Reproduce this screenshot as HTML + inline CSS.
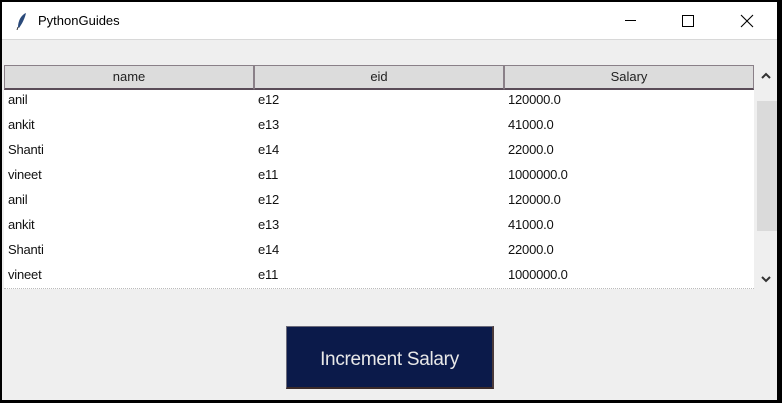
<!DOCTYPE html>
<html><head><style>
*{margin:0;padding:0;box-sizing:border-box}
body{width:782px;height:403px;background:#000;position:relative;overflow:hidden;font-family:"Liberation Sans",sans-serif}
.win{position:absolute;left:2px;top:2px;width:775px;height:398px;background:#efefef}
.title{position:absolute;left:0;top:0;width:775px;height:38px;background:#fff;border-bottom:1px solid #d8d8d8}
.title span{position:absolute;left:36px;top:11px;font-size:13px;color:#000}
.hdr{position:absolute;top:63px;height:25px;background:#dcdcdc;border:1px solid #8a8088;border-bottom:2px solid #5a4c58;font-size:13px;text-align:center;line-height:22px;color:#222}
.tbl{position:absolute;left:2px;top:88px;width:750px;height:199px;background:#fff;border-bottom:1px dotted #bbb}
.r{position:absolute;font-size:13px;color:#111;letter-spacing:-0.2px}
.sb{position:absolute;left:755px;top:63px;width:20px;height:226px;background:#efefef}
.thumb{position:absolute;left:755px;top:99px;width:20px;height:130px;background:#dadada}
.btn{position:absolute;left:284px;top:324px;width:208px;height:63px;background:#0b1a4a;border:1px solid #6a6a7a;border-right:2px solid #4a3a3a;border-bottom:2px solid #3a2a2a;color:#e8e8e8;font-size:19px;text-align:center;line-height:65px;letter-spacing:-0.3px}
</style></head><body>
<div class="win">
<div class="title">
<svg style="position:absolute;left:14px;top:10px" width="12" height="18" viewBox="0 0 12 18"><path d="M10 1 C5 3 2 9 2 15 L3 16 C6 12 9 6 10 1Z" fill="#2a4a7a"/><path d="M2 15 L1 18" stroke="#333" stroke-width="1"/></svg>
<span>PythonGuides</span>
<div style="position:absolute;left:623px;top:18px;width:11px;height:1px;background:#000"></div>
<div style="position:absolute;left:680px;top:13px;width:12px;height:12px;border:1px solid #000"></div>
<svg style="position:absolute;left:738px;top:12px" width="14" height="14"><path d="M1 1L13 13M13 1L1 13" stroke="#000" stroke-width="1.1"/></svg>
</div>
<div class="hdr" style="left:2px;width:250px">name</div>
<div class="hdr" style="left:252px;width:250px">eid</div>
<div class="hdr" style="left:502px;width:250px">Salary</div>
<div class="tbl"></div>
<div class="sb"></div><div class="thumb"></div>
<svg style="position:absolute;left:758px;top:70px" width="12" height="8"><path d="M2 6L6 2L10 6" stroke="#333" stroke-width="2" fill="none"/></svg>
<svg style="position:absolute;left:758px;top:273px" width="12" height="8"><path d="M2 2L6 6L10 2" stroke="#333" stroke-width="2" fill="none"/></svg>
<div class="btn">Increment Salary</div>
</div>
<div style="position:absolute;left:0;top:1px">
<div class="r" style="left:8px;top:91px">anil</div><div class="r" style="left:258px;top:91px">e12</div><div class="r" style="left:508px;top:91px">120000.0</div>
<div class="r" style="left:8px;top:116px">ankit</div><div class="r" style="left:258px;top:116px">e13</div><div class="r" style="left:508px;top:116px">41000.0</div>
<div class="r" style="left:8px;top:141px">Shanti</div><div class="r" style="left:258px;top:141px">e14</div><div class="r" style="left:508px;top:141px">22000.0</div>
<div class="r" style="left:8px;top:166px">vineet</div><div class="r" style="left:258px;top:166px">e11</div><div class="r" style="left:508px;top:166px">1000000.0</div>
<div class="r" style="left:8px;top:191px">anil</div><div class="r" style="left:258px;top:191px">e12</div><div class="r" style="left:508px;top:191px">120000.0</div>
<div class="r" style="left:8px;top:216px">ankit</div><div class="r" style="left:258px;top:216px">e13</div><div class="r" style="left:508px;top:216px">41000.0</div>
<div class="r" style="left:8px;top:241px">Shanti</div><div class="r" style="left:258px;top:241px">e14</div><div class="r" style="left:508px;top:241px">22000.0</div>
<div class="r" style="left:8px;top:266px">vineet</div><div class="r" style="left:258px;top:266px">e11</div><div class="r" style="left:508px;top:266px">1000000.0</div>
</div>
</body></html>
